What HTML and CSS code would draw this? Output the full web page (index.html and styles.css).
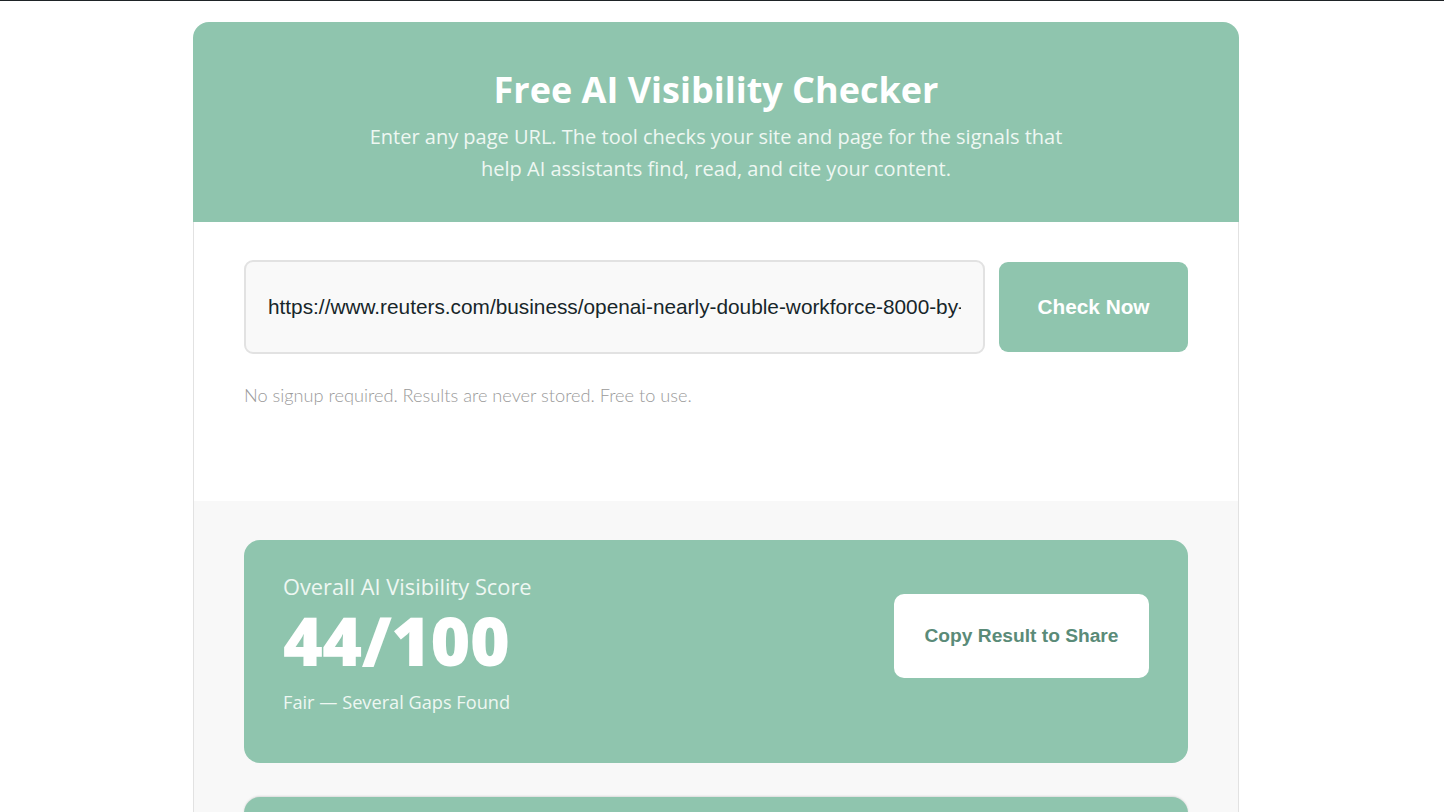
FILE: index.html
```html
<!DOCTYPE html>
<html lang="en">
<head>
<meta charset="utf-8">
<title>Free AI Visibility Checker</title>
<link rel="stylesheet" href="styles.css">
</head>
<body>
<main class="tool">
  <header class="hero">
    <h1 class="hero-title">Free AI Visibility Checker</h1>
    <p class="hero-sub">Enter any page URL. The tool checks your site and page for the signals that help AI assistants find, read, and cite your content.</p>
  </header>
  <section class="form-area">
    <form class="check-form">
      <input class="url-input" type="text" value="https://www.reuters.com/business/openai-nearly-double-workforce-8000-by-end-2026">
      <button class="check-btn" type="button">Check Now</button>
    </form>
    <p class="note">No signup required. Results are never stored. Free to use.</p>
  </section>
  <section class="results">
    <div class="score-card">
      <div class="score-info">
        <div class="score-label">Overall AI Visibility Score</div>
        <div class="score-value">44/100</div>
        <div class="score-verdict">Fair — Several Gaps Found</div>
      </div>
      <button class="copy-btn" type="button">Copy Result to Share</button>
    </div>
    <div class="next-card"></div>
  </section>
</main>
</body>
</html>
```
FILE: styles.css
```css
html, body {
  margin: 0;
  padding: 0;
  background: #ffffff;
}
body {
  border-top: 1px solid #1e2326;
  font-family: "Open Sans", "Noto Sans", sans-serif;
  overflow: hidden;
  height: 811px;
}
.tool {
  width: 1046px;
  margin: 21px 0 0 193px;
}
.hero {
  background: #8fc5ae;
  border-radius: 16px 16px 0 0;
  height: 200px;
  box-sizing: border-box;
  padding-top: 43px;
  text-align: center;
  color: #ffffff;
}
.hero-title {
  margin: 0;
  font-size: 36px;
  font-weight: 700;
  line-height: 50px;
}
.hero-sub {
  margin: 6px auto 0;
  width: 705px;
  font-size: 20px;
  font-weight: 400;
  line-height: 32px;
  color: #eef7f2;
}
.form-area {
  background: #ffffff;
  border-left: 1px solid #e2e2e2;
  border-right: 1px solid #e2e2e2;
  padding: 38px 50px 0;
  height: 279px;
  box-sizing: border-box;
}
.check-form {
  display: flex;
  align-items: center;
  gap: 14px;
}
.url-input {
  flex: 1;
  min-width: 0;
  height: 94px;
  box-sizing: border-box;
  border: 2px solid #e2e2e2;
  border-radius: 9px;
  background: #f9f9f9;
  padding: 0 22px;
  font-family: "Liberation Sans", Arial, sans-serif;
  font-size: 20.8px;
  color: #17262a;
  outline: none;
}
.check-btn {
  width: 189px;
  height: 90px;
  border: none;
  border-radius: 9px;
  background: #8fc5ae;
  color: #ffffff;
  font-family: "Liberation Sans", Arial, sans-serif;
  font-size: 20.8px;
  font-weight: 700;
}
.note {
  margin: 30px 0 0;
  font-family: Lato, "Open Sans", sans-serif;
  font-weight: 300;
  font-size: 18.2px;
  color: #9a9a9a;
}
.results {
  background: #f8f8f8;
  border-left: 1px solid #e2e2e2;
  border-right: 1px solid #e2e2e2;
  padding: 39px 50px 0;
  height: 400px;
  box-sizing: border-box;
}
.score-card {
  background: #8fc5ae;
  border-radius: 16px;
  height: 223px;
  box-sizing: border-box;
  padding: 32px 39px 0;
  display: flex;
  justify-content: space-between;
  align-items: flex-start;
  color: #ffffff;
}
.score-label {
  font-size: 21.8px;
  line-height: 30px;
  color: #eef7f2;
}
.score-value {
  font-size: 68px;
  font-weight: 800;
  line-height: 76px;
  letter-spacing: -0.5px;
}
.score-verdict {
  margin-top: 11px;
  font-size: 18.2px;
  line-height: 26px;
  color: #eef7f2;
}
.copy-btn {
  margin-top: 22px;
  width: 255px;
  height: 84px;
  border: none;
  border-radius: 10px;
  background: #ffffff;
  color: #5a8b78;
  font-family: "Liberation Sans", Arial, sans-serif;
  font-size: 19.2px;
  font-weight: 700;
}
.next-card {
  margin-top: 34px;
  height: 80px;
  background: #8fc5ae;
  border-radius: 16px;
  box-shadow: 0 -1px 2px rgba(0, 0, 0, 0.12);
}
```
